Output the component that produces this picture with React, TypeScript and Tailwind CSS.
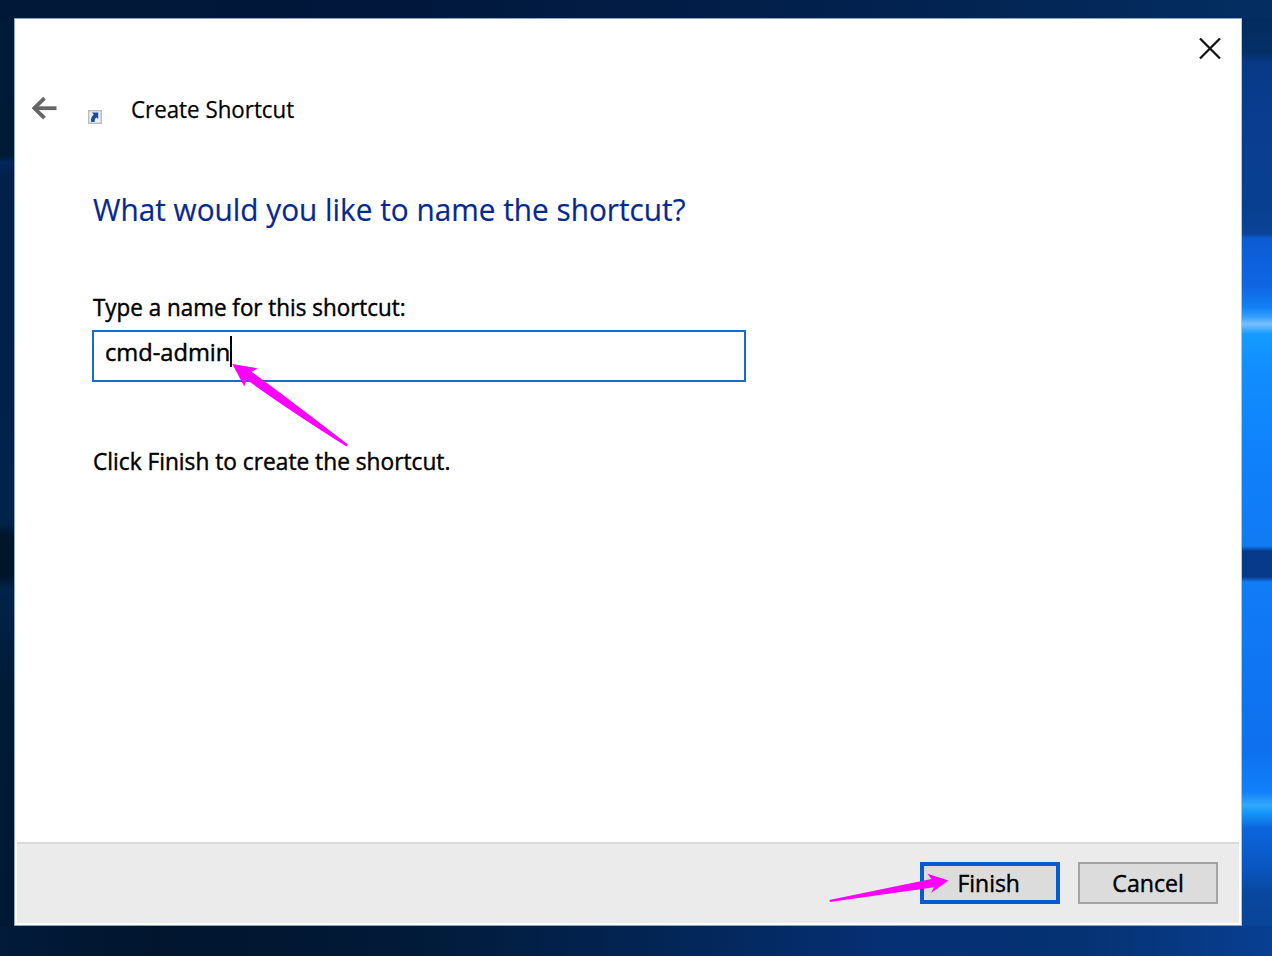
import type { ReactNode } from "react";

const FONT = "font-['Open_Sans','Noto_Sans',sans-serif]";

function Label({ className, children }: { className: string; children: ReactNode }) {
  return <span className={`block w-max origin-left whitespace-nowrap ${className}`}>{children}</span>;
}

function BackArrow() {
  return (
    <svg className="block" width="26" height="24" viewBox="0 0 26 24" fill="none" stroke="#666" strokeWidth="3.8">
      <path d="M24.500 12.200H2" />
      <path d="M12.500 2.200L2.300 12.200L12.500 22.200" />
    </svg>
  );
}

function ShortcutGlyph() {
  return (
    <svg className="block" width="14" height="14" viewBox="0 0 14 14">
      <rect x="0.7" y="0.7" width="12.6" height="12.6" fill="#e9eef7" stroke="#bcbcbc" strokeWidth="1.4" />
      <path d="M4 2.500H10.200V9L8.500 7.500C7 8.400 6.500 9.600 6.700 12H3.200C2.600 8.600 3.400 6.400 5.800 4.800Z" fill="#1c4c9c" />
    </svg>
  );
}

function CloseGlyph() {
  return (
    <svg className="block" width="22" height="22" viewBox="0 0 22 22" fill="none" stroke="#151515" strokeWidth="2.3">
      <path d="M1 0.500L21 20.500M21 0.500L1 20.500" />
    </svg>
  );
}

export default function App() {
  return (
    <div className={`relative grid h-[956px] w-[1272px] grid-cols-[14px_1228px_30px] grid-rows-[18px_908px_30px] overflow-hidden bg-[#031b3d] text-black ${FONT}`}>
      <div className="col-span-3 bg-[linear-gradient(90deg,#011838,#01173b_30%,#02224f_70%,#042e62)]" />
      <div className="bg-[linear-gradient(180deg,#011a38_0px,#001a36_138px,#04265a_144px,#022048_160px,#012149_350px,#01234a_505px,#01152b_518px,#01142a_556px,#01234a_572px,#011a36_670px,#011835_908px)]" />

      <main className="flex flex-col border border-[#8ba6bf] border-r-[#9dcdf5] bg-white px-[2px] pb-[2px]">
        <header className="flex h-[60px] justify-end pt-[18px] pr-[18px]">
          <button aria-label="Close" className="h-6"><CloseGlyph /></button>
        </header>
        <div className="flex h-[48px] pl-[15px]">
          <div className="pt-[17px]"><BackArrow /></div>
          <div className="ml-[30px] pt-[31px]"><ShortcutGlyph /></div>
          <Label className="ml-[29px] pt-[12px] text-[24px] leading-[36px] scale-x-[0.93] [-webkit-text-stroke:0.25px]">Create Shortcut</Label>
        </div>
        <section className="flex grow flex-col pl-[76px]">
          <h1 className="mt-[60px] h-[44px] text-[31px] leading-[44px] text-[#06298f]">
            <Label className="scale-x-[0.96] [-webkit-text-stroke:0.2px]">What would you like to name the shortcut?</Label>
          </h1>
          <div className="mt-[59px] h-[34px] text-[24px] leading-[34px]">
            <Label className="scale-x-[0.934] [-webkit-text-stroke:0.45px]">Type a name for this shortcut:</Label>
          </div>
          <div className="-ml-px mt-[6px] flex h-[52px] w-[654px] border-2 border-[#176bd0] pt-[3px] pl-[11px] text-[24px] leading-[34px]">
            <div className="w-[125px]"><Label className="scale-x-[0.986] [-webkit-text-stroke:0.45px]">cmd-admin</Label></div>
            <span className="mt-px h-[31px] w-[2px] bg-black" />
          </div>
          <div className="mt-[62px] h-[34px] text-[24px] leading-[34px]">
            <Label className="scale-x-[0.946] [-webkit-text-stroke:0.45px]">Click Finish to create the shortcut.</Label>
          </div>
        </section>
        <footer className="flex h-[81px] justify-end gap-[18px] border-t-2 border-[#dadada] bg-[#ebebeb] pt-[18px] pr-[21px] text-[24px]">
          <button className="flex h-[42px] w-[140px] items-center justify-center border-4 border-[#075bd0] bg-[#dcdcdc] pr-0.5">
            <span className="scale-x-[0.955] [-webkit-text-stroke:0.45px]">Finish</span>
          </button>
          <button className="flex h-[42px] w-[140px] items-center justify-center border-2 border-[#a3a3a3] bg-[#dcdcdc]">
            <span className="scale-x-[0.965] [-webkit-text-stroke:0.45px]">Cancel</span>
          </button>
        </footer>
      </main>

      <div className="bg-[linear-gradient(180deg,#032b5e_0px,#043068_34px,#083a88_46px,#0a3d90_110px,#084090_190px,#0a4398_216px,#0c5bd2_220px,#0e67e6_270px,#1282f5_290px,#35a0ff_299px,#79c0ff_306px,#159cff_316px,#118eff_350px,#0f80fa_450px,#107af2_528px,#083a8c_533px,#083a8c_559px,#107cf5_564px,#0e70ee_730px,#1180fa_774px,#32a8fa_787px,#1798fc_794px,#0c66de_810px,#0a55c0_850px,#0948a0_874px,#094497_908px)]" />
      <div className="col-span-3 bg-[linear-gradient(90deg,#011b3a,#01152e_12%,#011a38_32%,#03275a_55%,#063075_70%,#053272_85%,#083f92)]" />

      <svg className="pointer-events-none absolute inset-0" width="1272" height="956" viewBox="0 0 1272 956" fill="#ff00ff">
        <path d="M232.300 364L257.800 368.400L251.500 371.700Q285 396 348 444.600L346.500 446.500Q284 407 246.500 379.500L244.300 386.500Z" />
        <path d="M948.500 880.500L927.500 873.800L931.300 879L829.300 900L830 902L934 887.300L931 893Z" />
      </svg>
    </div>
  );
}
